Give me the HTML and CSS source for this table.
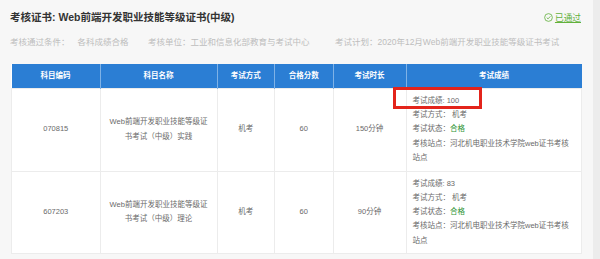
FILE: index.html
```html
<!DOCTYPE html>
<html lang="zh-CN">
<head>
<meta charset="utf-8">
<title>考核证书</title>
<link rel="stylesheet" href="styles.css">
</head>
<body>
<div class="page">
  <div class="head">
    <h1 class="title">考核证书: Web前端开发职业技能等级证书(中级)</h1>
    <a class="status">
      <svg class="status-icon" viewBox="0 0 10 10" width="9" height="9"><circle cx="5" cy="5" r="4.3" fill="none" stroke="currentColor" stroke-width="0.9"/><path d="M3 5.1 L4.5 6.5 L7.1 3.7" fill="none" stroke="currentColor" stroke-width="0.9"/></svg>
      <span class="status-text">已通过</span>
    </a>
  </div>
  <div class="meta">
    <span class="meta-item cond">考核通过条件：<span class="meta-value">各科成绩合格</span></span>
    <span class="meta-item unit">考核单位：工业和信息化部教育与考试中心</span>
    <span class="meta-item plan">考试计划：2020年12月Web前端开发职业技能等级证书考试</span>
  </div>
  <div class="table-wrap">
    <table class="grid">
      <colgroup>
        <col class="c1"><col class="c2"><col class="c3"><col class="c4"><col class="c5"><col class="c6">
      </colgroup>
      <thead>
        <tr><th>科目编码</th><th>科目名称</th><th>考试方式</th><th>合格分数</th><th>考试时长</th><th>考试成绩</th></tr>
      </thead>
      <tbody>
        <tr class="r1">
          <td>070815</td>
          <td class="name">Web前端开发职业技能等级证书考试（中级）实践</td>
          <td>机考</td>
          <td>60</td>
          <td>150分钟</td>
          <td class="result">
            <div>考试成绩: 100</div>
            <div>考试方式：&nbsp;机考</div>
            <div>考试状态：<span class="ok">合格</span></div>
            <div>考核站点：河北机电职业技术学院web证书考核站点</div>
          </td>
        </tr>
        <tr class="r2">
          <td>607203</td>
          <td class="name">Web前端开发职业技能等级证书考试（中级）理论</td>
          <td>机考</td>
          <td>60</td>
          <td>90分钟</td>
          <td class="result">
            <div>考试成绩: 83</div>
            <div>考试方式：&nbsp;机考</div>
            <div>考试状态：<span class="ok">合格</span></div>
            <div>考核站点：河北机电职业技术学院web证书考核站点</div>
          </td>
        </tr>
      </tbody>
    </table>
    <div class="highlight"></div>
  </div>
</div>
</body>
</html>
```

FILE: styles.css
```css
* { box-sizing: border-box; }
html, body { margin: 0; padding: 0; }
body {
  background: #ececec;
  font-family: "Liberation Sans", "Noto Sans CJK SC", sans-serif;
  width: 600px;
  height: 259px;
  overflow: hidden;
}
.page {
  width: 593px;
  height: 259px;
  background: #f7f7f7;
  padding: 10px 12px 0 10px;
}
.head {
  display: flex;
  justify-content: space-between;
  align-items: center;
  height: 15px;
}
.title {
  margin: 0;
  font-size: 10.5px;
  line-height: 15px;
  font-weight: bold;
  color: #333;
}
.status {
  display: flex;
  align-items: center;
  gap: 2px;
  color: #62b13c;
  font-size: 8.7px;
  line-height: 12px;
}
.status-icon { display: block; }
.status-text { text-decoration: underline; }
.meta {
  display: flex;
  margin-top: 10px;
  font-size: 8.5px;
  line-height: 14px;
  color: #bdbdbd;
  white-space: nowrap;
}
.meta-item.cond { width: 138px; }
.meta-item.unit { width: 187px; }
.meta-value { margin-left: 8px; }
.table-wrap {
  position: relative;
  margin: 15px 0 0 1px;
  width: 570px;
}
.grid {
  width: 570px;
  border-collapse: collapse;
  table-layout: fixed;
  background: #fff;
  font-size: 7.5px;
  color: #6a6a6a;
}
.c1 { width: 88.5px; }
.c2 { width: 117px; }
.c3 { width: 57.5px; }
.c4 { width: 58.5px; }
.c5 { width: 73px; }
.c6 { width: 175.5px; }
.grid th {
  background: #2b7ed4;
  color: #fff;
  font-weight: bold;
  height: 24px;
  padding: 0;
  line-height: 12px;
  border-left: 1px solid #7fb2e6;
  text-align: center;
}
.grid th:first-child { border-left: 0; }
.grid td {
  border: 1px solid #ececec;
  text-align: center;
  vertical-align: middle;
  line-height: 14.3px;
  padding: 5px 8px;
}
.grid td.result {
  text-align: left;
  padding: 5px 6px;
}
.r1 td { height: 83px; }
.r2 td { height: 82px; }
.ok { color: #2f9436; }
.highlight {
  position: absolute;
  left: 382px;
  top: 23px;
  width: 89px;
  height: 22px;
  border: 3px solid #e3241b;
}
```
